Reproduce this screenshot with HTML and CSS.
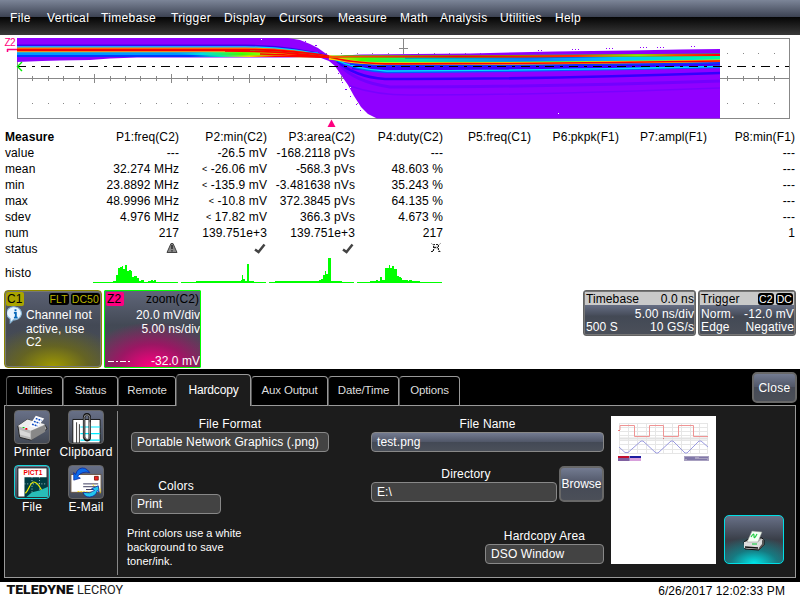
FILE: index.html
```html
<!DOCTYPE html>
<html lang="en">
<head>
<meta charset="utf-8">
<title>Oscilloscope</title>
<link rel="stylesheet" href="styles.css">
</head>
<body>
<nav class="menu"><span class="m1">File</span><span class="m2">Vertical</span><span class="m3">Timebase</span><span class="m4">Trigger</span><span class="m5">Display</span><span class="m6">Cursors</span><span class="m7">Measure</span><span class="m8">Math</span><span class="m9">Analysis</span><span class="m10">Utilities</span><span class="m11">Help</span></nav>

<svg class="scope" viewBox="0 35 800 93" width="800" height="93">
  <defs>
    <linearGradient id="heat" gradientUnits="userSpaceOnUse" x1="170" y1="0" x2="331" y2="0">
      <stop offset="0" stop-color="#0090ff"/><stop offset=".2" stop-color="#00e0e0"/><stop offset=".45" stop-color="#40ff00"/><stop offset=".75" stop-color="#ffff00"/><stop offset="1" stop-color="#ff6000"/>
    </linearGradient>
    <linearGradient id="heat2" gradientUnits="userSpaceOnUse" x1="190" y1="0" x2="275" y2="0">
      <stop offset="0" stop-color="#0040ff"/><stop offset=".35" stop-color="#00e0c0"/><stop offset=".7" stop-color="#ffd000"/><stop offset="1" stop-color="#ff0000"/>
    </linearGradient>
    <linearGradient id="redFade" gradientUnits="userSpaceOnUse" x1="345" y1="0" x2="720" y2="0">
      <stop offset="0" stop-color="#ff5000"/><stop offset=".3" stop-color="#f00"/><stop offset=".62" stop-color="#ff3000"/><stop offset=".78" stop-color="#a0e000"/><stop offset=".88" stop-color="#f40"/><stop offset="1" stop-color="#f00"/>
    </linearGradient>
    <linearGradient id="midFade" gradientUnits="userSpaceOnUse" x1="335" y1="0" x2="720" y2="0">
      <stop offset="0" stop-color="#ffd000"/><stop offset=".07" stop-color="#40ff00"/><stop offset=".22" stop-color="#00e8b0"/><stop offset=".5" stop-color="#0080ff"/><stop offset=".75" stop-color="#00c8ff"/><stop offset="1" stop-color="#00ffa0"/>
    </linearGradient>
  </defs>
  <g fill="none" stroke="#888" shape-rendering="crispEdges">
    <path d="M17.5 38.5H789.5V118.5H17.5ZM17 78.5H789"/>
    <path stroke-width="5" stroke-dasharray="1 14.44" d="M32.4 78.5H789"/>
    <path stroke-width="9" stroke-dasharray="1 76.2" d="M94.2 78.5H780"/>
    <path stroke-dasharray="1 14.44" d="M32.4 103.5H789M32.4 53.5H789"/>
    <path d="M403.5 38V54M399 48.5H408"/>
  </g>
  <g fill="#9000ff">
    <path d="M17 38H288L300 40L310 44L318 48L325 53L331 57L345 55.5L360 54.5L470 53.500L555 51.500L630 50.5L680 49.500L720 49V118.500H377L368 114L361 107L354 96L348 85L341 75L335 66L329 61L321 58L307 57.500L137 57.500L110 58.500L90 60L60 60.500L42 61L17 62Z"/>
    <path d="M291 39h1v1h-1zM305 41h1v1h-1zM315 45h2v1h-2zM338 73h1v1h-1zM342 82h1v1h-1zM345 89h2v1h-2zM350 96h1v1h-1zM356 104h1v1h-1zM360 110h1v1h-1zM538 50h1v1h-1zM541 50h1v1h-1zM572 49h1v1h-1zM575 49h1v1h-1zM578 49h1v1h-1zM606 48h1v1h-1zM609 48h1v1h-1zM612 48h1v1h-1zM640 47h1v1h-1zM643 47h1v1h-1zM646 47h1v1h-1zM657 47h1v1h-1zM660 47h1v1h-1zM663 47h1v1h-1zM691 46h1v1h-1zM694 46h1v1h-1z"/>
  </g>
  <path fill="#fff" d="M350 87h1v1h-1zM358 107h1v1h-1zM261 39h1v1h-1zM558 113h1v1h-1z"/>
  <g fill="none">
    <path stroke="#3a00f0" stroke-width="2" d="M17 45.500H245Q294 46 331 57"/>
    <path stroke="#00d8ff" stroke-width="1.500" d="M17 47H245Q292 47 331 57"/>
    <path stroke="#ff8a00" stroke-width="1.500" d="M17 48.200H245Q290 48.500 331 57"/>
    <path stroke="#003cff" stroke-width="5" d="M17 54.500H318"/>
    <path stroke="#0099ff" stroke-width="3" d="M17 53.500H318"/>
    <path fill="url(#heat)" d="M170 53.500L215 52H265Q300 52 331 57V57.500H300L265 56H210Z"/>
    <path stroke="url(#heat2)" stroke-width="1.500" d="M190 56.200H300L331 57.500"/>
    <path stroke="#ffe900" d="M17 51.700H260Q290 51.700 331 57"/>
    <path stroke="#f00" stroke-width="2.400" d="M17 50H245Q291 49.500 331 57"/>
    <path stroke="#20ff30" stroke-width="1.200" d="M250 51Q293 52 331 57.500"/>
    <path stroke="#f00" stroke-width="1.600" d="M225 51Q286 51 331 57.500M260 54Q298 55 331 57.500"/>
    <path stroke="#3c00ff" stroke-width="7" d="M352 66L385 68L560 66L720 63"/>
    <path stroke="#5a00ff" stroke-width="3" d="M340 65Q355 82 390 87Q540 87 720 81" opacity=".55"/>
    <path stroke="#3200ff" stroke-width="2.600" d="M337 61Q355 77 385 79Q540 79.500 720 73"/>
    <path stroke="#6b00ff" stroke-width="1.500" d="M350 86Q375 95 410 95Q540 95 720 88" opacity=".6"/>
    <path stroke="#0060ff" stroke-width="2.500" d="M332 58Q355 70.500 387 72Q550 71 720 67"/>
    <path stroke="#00dcff" stroke-width="1.300" d="M332 58Q355 69.500 387 71Q550 70.500 720 66.500"/>
    <path stroke="#10ff40" stroke-width="3.500" d="M332 58Q350 61.500 385 62.500Q540 63 720 60"/>
    <path stroke="url(#midFade)" stroke-width="4.500" d="M329 57.500L350 59Q385 59.500 500 59.500L720 57.500"/>
    <path stroke="#0030ff" stroke-width="1.300" d="M405 57.800L540 57.500L720 54.500" opacity=".75"/>
    <path stroke="#003cff" stroke-width="1.500" d="M350 64Q380 66 400 65.500Q540 66 720 63"/>
    <path stroke="#ffd900" stroke-width="2.600" d="M330 57.500Q350 63.200 385 63.500Q540 64 720 60.800"/>
    <path stroke="#f00" stroke-width="1.700" d="M329 57Q350 62.700 385 63.800Q540 64 720 61"/>
    <path stroke="#26e200" stroke-width="2.500" d="M331 57L345 56.500L480 56.500L620 55.500L720 54.800"/>
    <path stroke="url(#redFade)" stroke-width="1.800" d="M329 57L350 56.700L520 56.500L620 55.500L720 55"/>
  </g>
  <path d="M17 66.500H789" stroke="#000" stroke-dasharray="9 6 3 6" fill="none"/>
  <path d="M22 62L17.500 66.500L22 71" fill="none" stroke="#0e0" stroke-width="1.400"/>
  <path d="M7 49.500H17M7.500 49V52" fill="none" stroke="#ff0080" stroke-width="1.500"/>
  <text x="4.500" y="46" class="ztag">Z2</text>
  <path d="M327.500 127L331.500 119.500L335.500 127Z" fill="#ff0080"/>
</svg>

<section class="measure">
  <b>Measure</b><span>P1:freq(C2)</span><span>P2:min(C2)</span><span>P3:area(C2)</span><span>P4:duty(C2)</span><span>P5:freq(C1)</span><span>P6:pkpk(F1)</span><span>P7:ampl(F1)</span><span>P8:min(F1)</span>
  <i>value</i><span>---</span><span>-26.5 mV</span><span>-168.2118 pVs</span><span>---</span><span></span><span></span><span></span><span>---</span>
  <i>mean</i><span>32.274 MHz</span><span><small>&lt;</small> -26.06 mV</span><span>-568.3 pVs</span><span>48.603 %</span><span></span><span></span><span></span><span>---</span>
  <i>min</i><span>23.8892 MHz</span><span><small>&lt;</small> -135.9 mV</span><span>-3.481638 nVs</span><span>35.243 %</span><span></span><span></span><span></span><span>---</span>
  <i>max</i><span>48.9996 MHz</span><span><small>&lt;</small> -10.8 mV</span><span>372.3845 pVs</span><span>64.135 %</span><span></span><span></span><span></span><span>---</span>
  <i>sdev</i><span>4.976 MHz</span><span><small>&lt;</small> 17.82 mV</span><span>366.3 pVs</span><span>4.673 %</span><span></span><span></span><span></span><span>---</span>
  <i>num</i><span>217</span><span>139.751e+3</span><span>139.751e+3</span><span>217</span><span></span><span></span><span></span><span>1</span>
  <i>status</i>
  <span><svg class="st" viewBox="0 0 12 12"><path d="M1 10.500L5 1.500H7L11 10.500Z" fill="#888" stroke="#444"/><path d="M6 3V7M6 8.200V9.500" stroke="#111" stroke-width="1.200"/></svg></span>
  <span><svg class="st" viewBox="0 0 12 12"><path d="M1 7.500L4.500 10L10.500 2.500" fill="none" stroke="#444" stroke-width="2.500"/></svg></span>
  <span><svg class="st" viewBox="0 0 12 12"><path d="M1 7.500L4.500 10L10.500 2.500" fill="none" stroke="#444" stroke-width="2.500"/></svg></span>
  <span><svg class="st" viewBox="0 0 12 12"><path d="M1 1L11 10M11 1L1 10" stroke="#aaa"/><path d="M1 9.500H3.500V2.500H8.500V9.500H11M4 5.500H8" fill="none" stroke="#222" stroke-dasharray="2 1"/></svg></span>
  <span></span><span></span><span></span><span></span>
</section>
<section class="histo">
  <i>histo</i>
  <svg viewBox="93 257 349 27" width="349" height="27" shape-rendering="crispEdges">
    <path fill="#0f0" d="M93 282H113V281H116V275H118V268H120V267H122V266H123V269H125V265H127V271H129V270H131V271H132V277H134V276H137V278H139V281H141V280H144V282H148V281H151V280H153V281H154V280H156V282H178V283H93ZM181 282H196V281H241V280H242V275H243V279H245V281H247V264H249V281H254V282H266V283H181ZM269 282H275V281H319V280H321V279H323V275H325V271H326V274H328V258H331V281H342V282H354V283H269ZM357 282H370V281H376V280H378V281H380V277H382V280H385V268H389V265H390V268H392V266H394V269H397V276H399V277H401V278H402V280H408V281H409V280H412V281H420V282H442V283H357Z"/>
  </svg>
</section>

<section class="descs">
  <div class="ch c1">
    <div class="chhead"><span class="tag">C1</span><span class="flags"><em>FLT</em><em>DC50</em></span></div>
    <svg class="info" viewBox="0 0 16 17"><path d="M8 1A6.500 6 0 1 1 6 13L3 16V12A6.500 6 0 0 1 8 1Z" fill="#e9f5ff" stroke="#8ab8d8"/><path d="M8 3V5M6.500 6.500H8.300V11M6.500 11H10" stroke="#0868b8" stroke-width="1.800" fill="none"/></svg>
    <p>Channel not<br>active, use<br>C2</p>
  </div>
  <div class="ch z2">
    <div class="chhead"><span class="tag">Z2</span><span class="zoomname">zoom(C2)</span></div>
    <p>20.0 mV/div<br>5.00 ns/div</p>
    <div class="foot"><svg width="22" height="3"><path d="M0 1.500H22" stroke="#fff" stroke-dasharray="6 2 2 2"/></svg><span>-32.0 mV</span></div>
  </div>
  <div class="box tb"><div class="hd"><span>Timebase</span><span>0.0 ns</span></div><div class="ln"><span></span><span>5.00 ns/div</span></div><div class="ln"><span>500 S</span><span>10 GS/s</span></div></div>
  <div class="box tr"><div class="hd"><span>Trigger</span><span class="flags"><em>C2</em><em>DC</em></span></div><div class="ln"><span>Norm.</span><span>-12.0 mV</span></div><div class="ln"><span>Edge</span><span>Negative</span></div></div>
</section>

<section class="dialog">
  <div class="tabs"><span class="t1">Utilities</span><span class="t2">Status</span><span class="t3">Remote</span><span class="t4 on">Hardcopy</span><span class="t5">Aux Output</span><span class="t6">Date/Time</span><span class="t7">Options</span><button class="btn close">Close</button></div>
  <div class="panel">
    <div class="dests">
      <div class="dest"><svg viewBox="0 0 36 34"><path d="M3 16L13 9L32 15L34 19L17 31L5 28Z" fill="#b8b8b8" stroke="#222"/><path d="M3 16L13 9L32 14L17 21Z" fill="#eee"/><path d="M17 21L32 15L32 22L17 31Z" fill="#888"/><path d="M5 20L16 24V28L5 25Z" fill="#d8d8d8"/><path d="M15 16L22 5L31 8L23 18Z" fill="#fff"/><path d="M20 11L26 13M22 8L28 10M18 14L24 16" stroke="#124fc4" stroke-width="1.600" stroke-dasharray="2 1"/><path d="M8 17h2v1h-2z" fill="#0c0"/><path d="M11 18h2v2h-2z" fill="#e00"/></svg>Printer</div>
      <div class="dest"><svg viewBox="0 0 36 34"><path d="M4 9H33V34H4Z" fill="#fff" stroke="#111"/><path d="M12 17H33M12 24H33M12 31H33" stroke="#00eaff" stroke-width="1.300"/><path d="M8 12V34M11 14V34" stroke="#333"/><path d="M22 12V28Q22 31 19.500 31T16 28V7Q16 3.500 19 3.500T22 7V24M16 13V25" fill="none" stroke="#111" stroke-width="2.600"/><path d="M22 12V28Q22 30 19.500 30T16 28V7Q16 4 19 4T22 7V24" fill="none" stroke="#bbb" stroke-width=".8"/></svg>Clipboard</div>
      <div class="dest sel"><svg viewBox="0 0 36 34"><path d="M3 2H34V33H3Z" fill="#fff" stroke="#111"/><path d="M10 12H34V23L26 28L18 33H10Z" fill="#003c42"/><path d="M18 12V32M26 12V28M10 19H33" stroke="#b8d8d8" stroke-dasharray="1 2"/><path d="M11 29C15 25 16 17 20 17S26 22 29 27" fill="none" stroke="#ee0" stroke-width="1.300"/><path d="M12 33L18 28L26 26L35 22V33Z" fill="#28bcb8"/><text x="9" y="10" class="pict" textLength="20">PICT1</text></svg>File</div>
      <div class="dest"><svg viewBox="0 0 36 34"><path d="M2 9H34V28H2Z" fill="#fff" stroke="#654"/><path d="M27 11h4v4h-4z" fill="#e22" stroke="#821"/><path d="M15 19H31M15 22H31M18 25H28" stroke="#335"/><path d="M25 20L33 24V29M9 27L25 28" stroke="#ffe100" stroke-dasharray="2 1" fill="none"/><path d="M5 7V15L12 13L9 11Q14 5 22 7Q17 0 11 3Q8 5 7 9Z" fill="#0d6bea" stroke="#0626a0" stroke-width=".8"/><path d="M31 21L24 24L27 26Q22 30 15 28Q16 33 22 33Q29 32 30 26L32 28Z" fill="#22c6ee" stroke="#0626a0" stroke-width=".8"/></svg>E-Mail</div>
    </div>
    <div class="colA">
      <label class="w198">File Format</label><div class="fld w198">Portable Network Graphics (.png)</div>
      <label class="w90 gapc">Colors</label><div class="fld w90">Print</div>
      <p>Print colors use a white<br>background to save<br>toner/ink.</p>
    </div>
    <div class="colB">
      <label>File Name</label><div class="fld blue">test.png</div>
      <div class="dirrow"><div class="dir"><label>Directory</label><div class="fld">E:\</div></div><button class="btn browse">Browse</button></div>
      <div class="area"><label>Hardcopy Area</label><div class="fld">DSO Window</div></div>
    </div>
    <svg class="preview" viewBox="0 0 105 148" width="105" height="148">
      <path fill="#fff" d="M0 0H105V148H0Z"/>
      <path stroke="#e6e6e6" fill="none" d="M8.500 7V38M17.500 7V38M26.500 7V38M35.500 7V38M44.500 7V38M52.500 7V38M61.500 7V38M70.500 7V38M79.500 7V38M88.500 7V38M96.500 7V38M8 7.500H97M8 11.500H97M8 15.500H97M8 19.500H97M8 24.500H97M8 28.500H97M8 33.500H97M8 37.500H97"/>
      <path stroke="#e2e2e2" stroke-width="2" d="M8 22.500H97"/>
      <path stroke="#ef9494" fill="none" d="M9 14V9.500H23.500V20.500H38.500V9.500H52.500V20.500H67.500V9.500H82.500V20.500H97"/>
      <path stroke="#9a9adf" fill="none" d="M8 31L14 36.500H17L30 25H32L45 37H47L60 25H62L74 37H76L88 25H90L97 31"/>
      <path fill="#a090c0" d="M7 40h23v5h-23z"/><path fill="#a8a0c0" d="M73 40h25v5h-25z"/><path fill="#8078a8" d="M74 41h10v2h-10zM88 41h9v1h-9zM76 43h20v1h-20z"/><path fill="#c01030" d="M7 40h11v2h-11z"/><path fill="#1c1ca0" d="M19 40h11v2h-11z"/><path fill="#8060a0" d="M7 42h11v3h-11z"/><path fill="#d8a0dc" d="M19 42h11v3h-11z"/><path fill="#e00000" opacity=".5" d="M7 14h2v1h-2zM52 22h1v1h-1z"/>
    </svg>
    <button class="btn print" aria-label="Print"><svg viewBox="0 0 24 22" width="24" height="22"><path d="M2 12L8 8H20L22 10V15L17 20L3 19Z" fill="#aaa" stroke="#111"/><path d="M17 13L22 9V15L17 20Z" fill="#555"/><path d="M2 12H16L20 9V14L16 19L2 18Z" fill="#ddd"/><path d="M3 17L16 18" stroke="#111" stroke-width="1.500"/><path d="M10 1L20 2L16 12H5Z" fill="#f4fff4" stroke="#888" stroke-width=".5"/><path d="M9 7Q12 2 12 6T15 4" fill="none" stroke="#2c4" stroke-width="1.200"/><path d="M10 14H15" stroke="#0c3"/></svg></button>
  </div>
</section>
<footer><svg width="130" height="18"><text x="6.500" y="12" class="logo heavy" textLength="67" lengthAdjust="spacingAndGlyphs">TELEDYNE</text><text x="77" y="12" class="logo" textLength="46" lengthAdjust="spacingAndGlyphs">LECROY</text></svg><time>6/26/2017 12:02:33 PM</time></footer>
</body>
</html>
```
FILE: styles.css
```css
* { box-sizing: border-box; }
body { margin: 0; width: 800px; height: 600px; overflow: hidden; background: #fff; color: #000; font: 12px/16px "Liberation Sans", Arial, sans-serif; letter-spacing: .2px; }
svg { display: block; }
i, em { font-style: normal; }
p { margin: 0; }

.menu { height: 35px; display: grid; grid-template-columns: 37px 54px 70px 53px 55px 59px 62px 40px 60px 55px 50px; padding: 10px 0 0 10px; color: #fff; letter-spacing: .35px; background: linear-gradient(#7c8598 0, #3c4252 17px, #050505 17px, #393939 35px); }
.scope { height: 93px; }
.ztag { font-size: 10px; fill: #ff0080; letter-spacing: -.5px; }

.measure { display: grid; grid-template-columns: 91px repeat(8, 88px); grid-auto-rows: 16px; line-height: 18px; letter-spacing: .1px; }
.measure b, .measure i { padding-left: 5px; }
.measure b { letter-spacing: .1px; }
.measure span { text-align: right; white-space: nowrap; }
.measure small { font-size: 9px; line-height: 1; vertical-align: 1px; }
.st { width: 12px; height: 12px; margin: 2px 1px 0 auto; }
.histo { height: 28px; display: flex; padding-top: 1px; }
.histo i { width: 93px; padding: 8px 0 0 5px; }

.descs { display: flex; margin-top: 6px; padding-left: 4px; height: 79px; color: #fff; line-height: 14px; }
.ch { width: 98px; height: 78px; border-radius: 4px; position: relative; overflow: hidden; padding: 1px; }
.chhead { display: flex; justify-content: space-between; height: 14px; color: #000; }
.tag { width: 18px; padding-left: 1px; border-radius: 2px; }
.flags { display: flex; gap: 2px; }
.flags em { background: #000; border-radius: 3px; font-size: 10.500px; line-height: 12px; height: 12px; margin-top: 1px; padding: 0 1px; letter-spacing: .1px; }
.c1 { border: 1px solid #8d8800; box-shadow: inset 0 0 0 1px #777; background: radial-gradient(ellipse 70px 42px at 50% 100%, #a19b00, rgba(120,115,0,.6) 50%, transparent), linear-gradient(#5a6072 0, #434955 45%, #4b4f58); }
.c1 .tag { background: #aaa400; }
.c1 .flags em { color: #b9b300; }
.c1 p { padding: 3px 0 0 20px; line-height: 13.500px; letter-spacing: .1px; }
.info { position: absolute; left: 2px; top: 15px; width: 17px; height: 18px; }
.z2 { width: 97px; margin: 0 1px 0 2px; border: 1px solid #0f0; border-radius: 1px; background: radial-gradient(ellipse 70px 45px at 50% 100%, #ff0080, rgba(190,0,105,.7) 50%, transparent) padding-box, linear-gradient(#5f6679 0, #434955 45%, #4b4f58) padding-box; text-align: right; }
.z2 .tag { background: #ff0080; text-align: left; }
.z2 p { line-height: 14px; padding-top: 2px; margin-right: -1px; }
.z2 .chhead, .z2 p { letter-spacing: .05px; }
.z2 .foot { display: flex; justify-content: space-between; align-items: center; margin-top: 18px; padding-left: 2px; letter-spacing: .05px; margin-right: -1px; }
.box { height: 46px; border: 1px solid #626262; border-radius: 3px; background: linear-gradient(#666e84 14px, #484e5c 24px, #434955 25px, #4b505a); box-shadow: inset 0 0 0 1px #777; padding: 1px; line-height: 14px; letter-spacing: .15px; white-space: nowrap; }
.tb { width: 113px; margin-left: 381px; }
.tr { width: 98px; margin-left: 2px; }
.hd, .ln { display: flex; justify-content: space-between; height: 14px; padding-left: 1px; }
.hd { background: #c9c9c9; color: #000; height: 13px; }
.ln:nth-child(2) { padding-top: 2px; height: 15px; }
.hd .flags { color: #fff; padding-right: 1px; }
.tb .hd, .tb .ln { letter-spacing: .1px; }

.dialog { height: 213px; background: #000; padding: 5px 4px 0; color: #fff; }
.tabs { height: 32px; display: flex; align-items: flex-end; padding-left: 2px; letter-spacing: -.15px; position: relative; z-index: 1; margin-bottom: -1px; font-size: 11.500px; }
.tabs span { height: 30px; border: 1px solid #999; border-left-color: #555; border-radius: 4px 4px 0 0; text-align: center; padding-top: 5px; color: #ddd; background: #000; }
.tabs .on { height: 32px; padding-top: 7px; background: #1c1c1c; border-bottom: 0; color: #fff; font-size: 12px; }
.t1 { width: 57px; } .t2 { width: 55px; } .t3 { width: 58px; } .t4 { width: 75px; } .t5 { width: 77px; } .t6 { width: 71px; } .t7 { width: 61px; }
.btn { font: inherit; letter-spacing: .3px; color: #fff; border: 2px solid #686868; border-radius: 5px; background: linear-gradient(#737b91, #505667 48%, #454a56 50%, #4b4f58); padding: 0; }
.close { width: 45px; height: 31px; margin: 0 -1px 3px auto; font-size: 12px; }
.panel { height: 173px; border: 1px solid #999; background: #1c1c1c; display: flex; position: relative; z-index: 0; }
.dests { width: 113px; height: 164px; margin-top: 5px; border-right: 1px solid #888; display: grid; grid-template-columns: 54px 54px; grid-template-rows: 55px 55px; align-content: start; text-align: center; line-height: 14px; letter-spacing: .2px; }
.dest { white-space: nowrap; display: flex; flex-direction: column; align-items: center; }
.dest svg { width: 36px; height: 34px; margin: -1px 0 1px; border: 1px solid #666; border-radius: 4px; background: linear-gradient(#687087, #434955); }
.dest.sel svg { border-color: #19d5d9; }
.pict { font: bold 7px "Liberation Sans", sans-serif; fill: #e00; letter-spacing: 0; }
label { display: block; text-align: center; height: 15px; line-height: 14px; letter-spacing: .15px; }
.fld { height: 20px; border: 1px solid #888; border-radius: 4px; background: #434343; line-height: 18px; padding-left: 5px; white-space: nowrap; letter-spacing: .12px; }
.blue { background: linear-gradient(#737b91, #505667 50%, #434955 52%, #4b505a); }
.colA { width: 198px; margin: 11px 0 0 13px; }
.w198 { width: 198px; }
.w90 { width: 90px; }
.gapc { margin-top: 27px; }
.colA p { font-size: 11px; line-height: 14px; margin: 12px 0 0 -4px; letter-spacing: .03px; }
.colB { width: 233px; margin: 11px 0 0 42px; }
.dirrow { display: flex; gap: 2px; margin-top: 14px; align-items: flex-start; }
.dir { width: 186px; padding-top: 1px; }
.dir label { padding-left: 4px; }
.browse { width: 45px; height: 36px; font-size: 12px; white-space: nowrap; letter-spacing: 0; }
.area { width: 119px; margin: 27px 0 0 auto; }
.preview { margin: 10px 0 0 7px; }
.print { width: 60px; height: 49px; margin: 109px 0 0 8px; border: 1px solid #00dfe5; display: flex; align-items: center; justify-content: center; background: radial-gradient(ellipse 46px 26px at 50% 100%, #00e4e7, rgba(0,150,155,.65) 50%, transparent), linear-gradient(#687087, #3a3f49 50%, #434955); }
.print svg { margin-top: 2px; }

footer { display: flex; justify-content: space-between; height: 18px; }
.logo { font: 400 13.500px Roboto, sans-serif; fill: #222; letter-spacing: 0; }
.logo.heavy { font-weight: 900; fill: #111; }
time { padding: 1px 15px 0 0; letter-spacing: .1px; }
```
